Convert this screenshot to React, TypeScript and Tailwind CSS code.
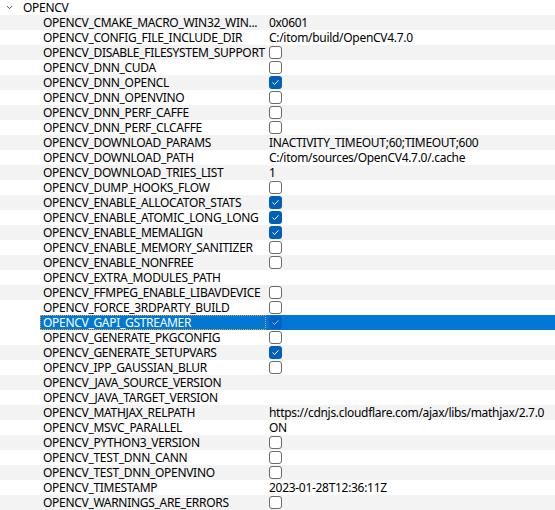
import { ChevronDown } from 'lucide-react';

type Value = string | boolean | null;

interface Entry {
  name: string;
  value: Value;
}

const entries: Entry[] = [
  { name: 'OPENCV_CMAKE_MACRO_WIN32_WIN...', value: '0x0601' },
  { name: 'OPENCV_CONFIG_FILE_INCLUDE_DIR', value: 'C:/itom/build/OpenCV4.7.0' },
  { name: 'OPENCV_DISABLE_FILESYSTEM_SUPPORT', value: false },
  { name: 'OPENCV_DNN_CUDA', value: false },
  { name: 'OPENCV_DNN_OPENCL', value: true },
  { name: 'OPENCV_DNN_OPENVINO', value: false },
  { name: 'OPENCV_DNN_PERF_CAFFE', value: false },
  { name: 'OPENCV_DNN_PERF_CLCAFFE', value: false },
  { name: 'OPENCV_DOWNLOAD_PARAMS', value: 'INACTIVITY_TIMEOUT;60;TIMEOUT;600' },
  { name: 'OPENCV_DOWNLOAD_PATH', value: 'C:/itom/sources/OpenCV4.7.0/.cache' },
  { name: 'OPENCV_DOWNLOAD_TRIES_LIST', value: '1' },
  { name: 'OPENCV_DUMP_HOOKS_FLOW', value: false },
  { name: 'OPENCV_ENABLE_ALLOCATOR_STATS', value: true },
  { name: 'OPENCV_ENABLE_ATOMIC_LONG_LONG', value: true },
  { name: 'OPENCV_ENABLE_MEMALIGN', value: true },
  { name: 'OPENCV_ENABLE_MEMORY_SANITIZER', value: false },
  { name: 'OPENCV_ENABLE_NONFREE', value: false },
  { name: 'OPENCV_EXTRA_MODULES_PATH', value: null },
  { name: 'OPENCV_FFMPEG_ENABLE_LIBAVDEVICE', value: false },
  { name: 'OPENCV_FORCE_3RDPARTY_BUILD', value: false },
  { name: 'OPENCV_GAPI_GSTREAMER', value: true },
  { name: 'OPENCV_GENERATE_PKGCONFIG', value: false },
  { name: 'OPENCV_GENERATE_SETUPVARS', value: true },
  { name: 'OPENCV_IPP_GAUSSIAN_BLUR', value: false },
  { name: 'OPENCV_JAVA_SOURCE_VERSION', value: null },
  { name: 'OPENCV_JAVA_TARGET_VERSION', value: null },
  { name: 'OPENCV_MATHJAX_RELPATH', value: 'https://cdnjs.cloudflare.com/ajax/libs/mathjax/2.7.0' },
  { name: 'OPENCV_MSVC_PARALLEL', value: 'ON' },
  { name: 'OPENCV_PYTHON3_VERSION', value: false },
  { name: 'OPENCV_TEST_DNN_CANN', value: false },
  { name: 'OPENCV_TEST_DNN_OPENVINO', value: false },
  { name: 'OPENCV_TIMESTAMP', value: '2023-01-28T12:36:11Z' },
  { name: 'OPENCV_WARNINGS_ARE_ERRORS', value: false },
];

const SELECTED = 'OPENCV_GAPI_GSTREAMER';

function CheckBox({ checked, selected }: { checked: boolean; selected: boolean }) {
  if (checked) {
    return (
      <span
        className={`flex h-[13px] w-[13px] items-center justify-center rounded-[3px] ${
          selected ? 'bg-[#0063c4]' : 'bg-[#005fb8]'
        }`}
      >
        <svg width="9" height="9" viewBox="0 0 9 9" fill="none">
          <path
            d="M1.8 4.8 L3.6 6.5 L7.2 2.6"
            stroke={selected ? '#9fc3ea' : '#ffffff'}
            strokeWidth="1"
            strokeLinecap="round"
            strokeLinejoin="round"
          />
        </svg>
      </span>
    );
  }
  return <span className="block h-[13px] w-[13px] rounded-[3px] border border-[#6b6b6b] bg-white" />;
}

export default function App() {
  return (
    <div className="h-[510px] w-[555px] overflow-hidden bg-white text-[12px] leading-[15px] tracking-[-0.3px] text-black [font-family:'Noto_Sans',sans-serif]">
      <div className="flex h-[15px] items-center">
        <ChevronDown className="ml-[5px] h-[9px] w-[9px] text-[#404040]" strokeWidth={2.5} />
        <span className="ml-[9px]">OPENCV</span>
      </div>
      {entries.map((entry, i) => {
        const selected = entry.name === SELECTED;
        const rowBg = selected ? '' : i % 2 === 0 ? 'bg-[#f3f3f3]' : 'bg-white';
        return (
          <div key={entry.name} className={`flex h-[15px] ${rowBg}`}>
            <div className="w-[40px] shrink-0" />
            <div
              className={`w-[226px] shrink-0 overflow-hidden whitespace-nowrap ${
                selected
                  ? 'border border-dotted border-[#f0a030] bg-[#0078d4] pl-[2px] leading-[13px] text-white'
                  : 'pl-[3px]'
              }`}
            >
              {entry.name}
            </div>
            <div
              className={`flex min-w-0 flex-1 items-center whitespace-nowrap pl-[3px] ${
                selected ? 'bg-[#0078d4]' : ''
              }`}
            >
              {typeof entry.value === 'boolean' ? (
                <CheckBox checked={entry.value} selected={selected} />
              ) : (
                entry.value
              )}
            </div>
          </div>
        );
      })}
    </div>
  );
}
